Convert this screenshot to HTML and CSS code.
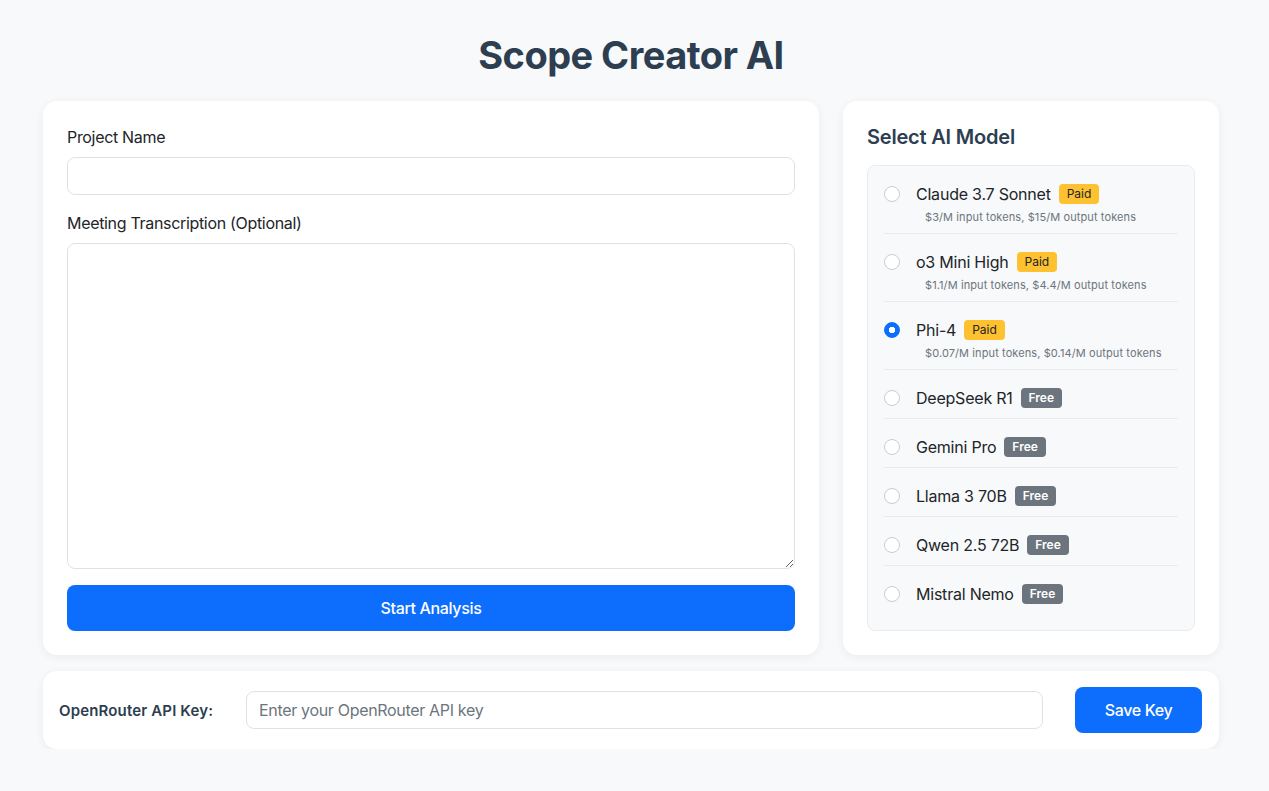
FILE: index.html
```html
<!DOCTYPE html>
<html lang="en">
<head>
<meta charset="utf-8">
<title>Scope Creator AI</title>
<link rel="stylesheet" href="styles.css">
</head>
<body>
<div class="container">
  <h1 class="title">Scope Creator AI</h1>
  <div class="main-grid">
    <div class="card form-card">
      <label class="field-label" for="project">Project Name</label>
      <input class="text-input" id="project" type="text">
      <label class="field-label second" for="transcript">Meeting Transcription (Optional)</label>
      <textarea class="text-area" id="transcript"></textarea>
      <button class="btn btn-primary btn-block">Start Analysis</button>
    </div>
    <div class="card model-card">
      <h2 class="card-title">Select AI Model</h2>
      <div class="model-list">
        <label class="model-item">
          <input type="radio" name="model" class="radio">
          <div class="model-body">
            <div class="model-head"><span class="model-name">Claude 3.7 Sonnet</span><span class="badge badge-paid">Paid</span></div>
            <div class="model-desc">$3/M input tokens, $15/M output tokens</div>
          </div>
        </label>
        <label class="model-item">
          <input type="radio" name="model" class="radio">
          <div class="model-body">
            <div class="model-head"><span class="model-name">o3 Mini High</span><span class="badge badge-paid">Paid</span></div>
            <div class="model-desc">$1.1/M input tokens, $4.4/M output tokens</div>
          </div>
        </label>
        <label class="model-item">
          <input type="radio" name="model" class="radio" checked>
          <div class="model-body">
            <div class="model-head"><span class="model-name">Phi-4</span><span class="badge badge-paid">Paid</span></div>
            <div class="model-desc">$0.07/M input tokens, $0.14/M output tokens</div>
          </div>
        </label>
        <label class="model-item">
          <input type="radio" name="model" class="radio">
          <div class="model-body">
            <div class="model-head"><span class="model-name">DeepSeek R1</span><span class="badge badge-free">Free</span></div>
          </div>
        </label>
        <label class="model-item">
          <input type="radio" name="model" class="radio">
          <div class="model-body">
            <div class="model-head"><span class="model-name">Gemini Pro</span><span class="badge badge-free">Free</span></div>
          </div>
        </label>
        <label class="model-item">
          <input type="radio" name="model" class="radio">
          <div class="model-body">
            <div class="model-head"><span class="model-name">Llama 3 70B</span><span class="badge badge-free">Free</span></div>
          </div>
        </label>
        <label class="model-item">
          <input type="radio" name="model" class="radio">
          <div class="model-body">
            <div class="model-head"><span class="model-name">Qwen 2.5 72B</span><span class="badge badge-free">Free</span></div>
          </div>
        </label>
        <label class="model-item">
          <input type="radio" name="model" class="radio">
          <div class="model-body">
            <div class="model-head"><span class="model-name">Mistral Nemo</span><span class="badge badge-free">Free</span></div>
          </div>
        </label>
      </div>
    </div>
  </div>
  <div class="card key-card">
    <label class="key-label" for="apikey">OpenRouter API Key:</label>
    <input class="text-input key-input" id="apikey" type="text" placeholder="Enter your OpenRouter API key">
    <button class="btn btn-primary btn-save">Save Key</button>
  </div>
</div>
</body>
</html>
```

FILE: styles.css
```css
* { box-sizing: border-box; }

html, body {
  margin: 0;
  padding: 0;
  background: #f8f9fa;
  font-family: Inter, "Noto Sans", "Liberation Sans", sans-serif;
  color: #212529;
}

.container {
  width: 1176px;
  margin-left: 43px;
  padding-top: 32px;
}

.title {
  margin: 0 0 23px;
  text-align: center;
  font-size: 38px;
  line-height: 46px;
  font-weight: 700;
  color: #2c3e50;
  letter-spacing: -0.55px;
}

.main-grid {
  display: grid;
  grid-template-columns: 776px 376px;
  gap: 24px;
}

.card {
  background: #fff;
  border-radius: 14px;
  box-shadow: 0 2px 10px rgba(0, 0, 0, 0.06);
}

.form-card {
  padding: 24px;
  display: flex;
  flex-direction: column;
}

.field-label {
  display: block;
  font-size: 16px;
  line-height: 24px;
  margin-bottom: 8px;
  color: #212529;
  letter-spacing: -0.32px;
}

.field-label.second { margin-top: 16px; }

.text-input {
  display: block;
  width: 100%;
  height: 38px;
  border: 1px solid #dee2e6;
  border-radius: 8px;
  padding: 6px 12px;
  font-family: inherit;
  font-size: 16px;
  letter-spacing: -0.32px;
  color: #212529;
  background: #fff;
  outline: none;
}

.text-input::placeholder { color: #6c757d; }

.text-area {
  display: block;
  width: 100%;
  height: 326px;
  border: 1px solid #dee2e6;
  border-radius: 8px;
  padding: 6px 12px;
  font-family: inherit;
  font-size: 16px;
  resize: vertical;
  outline: none;
}

.btn {
  border: none;
  border-radius: 8px;
  font-family: inherit;
  font-size: 16px;
  font-weight: 500;
  letter-spacing: -0.35px;
  cursor: pointer;
}

.btn-primary {
  background: #0d6efd;
  color: #fff;
}

.btn-block {
  width: 100%;
  height: 46px;
  margin-top: 16px;
}

.model-card {
  padding: 24px;
}

.card-title {
  margin: 0 0 16px;
  font-size: 20px;
  line-height: 24px;
  font-weight: 600;
  color: #2c3e50;
  letter-spacing: -0.2px;
}

.model-list {
  background: #f8f9fa;
  border: 1px solid #e9ecef;
  border-radius: 8px;
  padding: 0 16px 16px;
}

.model-item {
  display: flex;
  align-items: flex-start;
  padding: 16px 0 8px;
  border-bottom: 1px solid #e9ecef;
  cursor: pointer;
}

.model-item:last-child { border-bottom: none; }

.radio {
  appearance: none;
  -webkit-appearance: none;
  width: 16px;
  height: 16px;
  margin: 4px 16px 0 0;
  border: 1px solid #c9cdd1;
  border-radius: 50%;
  background: #fff;
  flex-shrink: 0;
}

.radio:checked {
  border-color: #0d6efd;
  background: radial-gradient(circle, #fff 0 3px, #0d6efd 3.5px);
}

.model-body { flex: 1; }

.model-head {
  display: flex;
  align-items: center;
  gap: 8px;
  height: 24px;
}

.model-name {
  font-size: 16px;
  line-height: 24px;
  color: #212529;
  letter-spacing: -0.22px;
}

.badge {
  font-size: 12px;
  line-height: 14px;
  padding: 3px 8px;
  border-radius: 4px;
}

.badge-paid {
  background: #fec12f;
  color: #212529;
}

.badge-free {
  background: #6c757d;
  color: #fff;
  font-weight: 600;
}

.model-desc {
  margin-top: 4px;
  padding-left: 9px;
  font-size: 11px;
  line-height: 15px;
  color: #6c757d;
  letter-spacing: 0.1px;
}

.key-card {
  margin-top: 16px;
  padding: 16px 17px 16px 16px;
  display: flex;
  align-items: center;
  gap: 32px;
}

.key-label {
  font-size: 15px;
  font-weight: 600;
  color: #2c3e50;
  width: 155px;
  letter-spacing: 0.15px;
}

.key-input { flex: 1; }

.btn-save {
  width: 127px;
  height: 46px;
}
```
